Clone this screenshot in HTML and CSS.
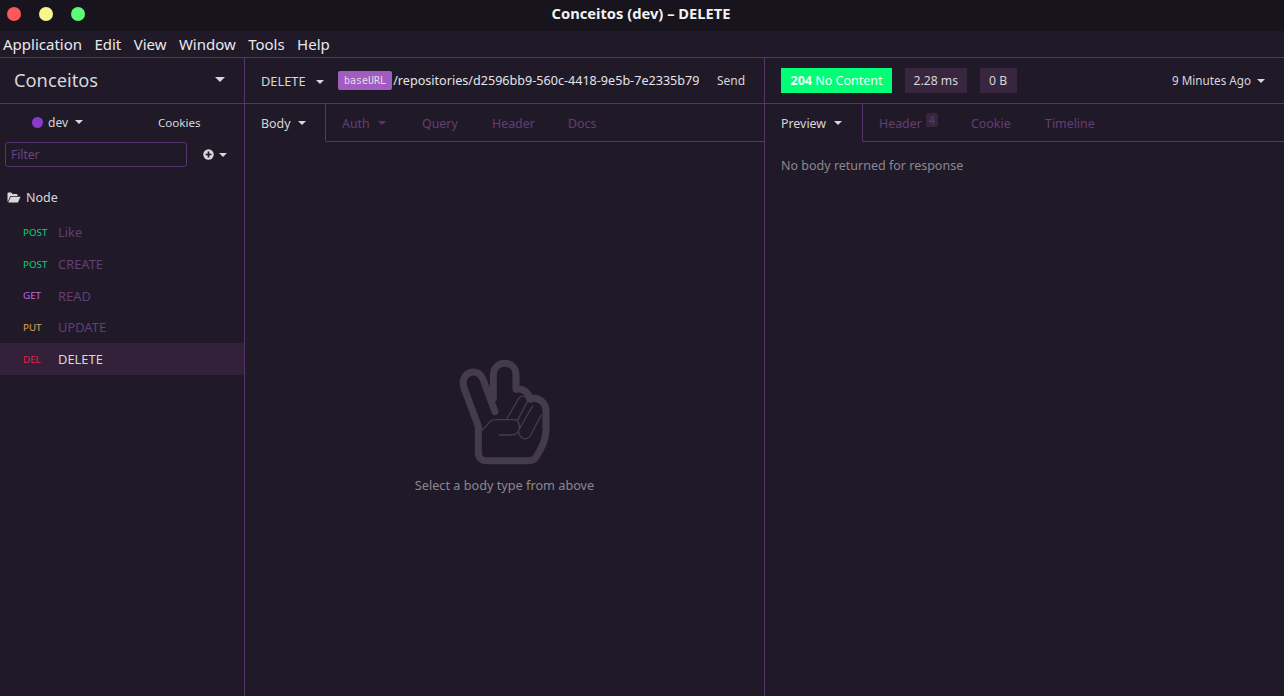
FILE: index.html
```html
<!DOCTYPE html>
<html lang="en">
<head>
<meta charset="utf-8">
<title>Conceitos (dev) – DELETE</title>
<link rel="stylesheet" href="styles.css">
</head>
<body>
<header class="titlebar">
  <div class="lights"><i class="light red"></i><i class="light yellow"></i><i class="light green"></i></div>
  <div class="title">Conceitos (dev) – DELETE</div>
</header>
<nav class="menubar">
  <span>Application</span><span>Edit</span><span>View</span><span>Window</span><span>Tools</span><span>Help</span>
</nav>
<main class="app">
  <aside class="sidebar">
    <div class="ws-head"><span class="ws-name">Conceitos</span><i class="caret big"></i></div>
    <div class="env-row">
      <span class="env"><i class="dot"></i>dev<i class="caret"></i></span>
      <span class="cookies">Cookies</span>
    </div>
    <div class="filter-row">
      <div class="filter">Filter</div>
      <span class="add">
        <svg width="11" height="11" viewBox="0 0 11 11"><circle cx="5.5" cy="5.5" r="5.2" fill="#d8d6db"/><path d="M5.5 2.6v5.8M2.6 5.5h5.8" stroke="#201a28" stroke-width="1.7"/></svg>
        <i class="caret"></i>
      </span>
    </div>
    <div class="folder">
      <svg width="14" height="11" viewBox="0 0 14 11"><path d="M0.5 9.5V1.6C.5 1 1 .5 1.6 .5h2.6l1.3 1.4h4c.6 0 1 .4 1 1V4H3.4L.8 9.6z" fill="#d8d6db"/><path d="M3.8 4.8h9.7L11 10.4H1.2z" fill="#d8d6db"/></svg>
      Node
    </div>
    <ul class="reqs">
      <li class="req"><span class="method post">POST</span><span class="rname">Like</span></li>
      <li class="req"><span class="method post">POST</span><span class="rname">CREATE</span></li>
      <li class="req"><span class="method get">GET</span><span class="rname">READ</span></li>
      <li class="req"><span class="method put">PUT</span><span class="rname">UPDATE</span></li>
      <li class="req active"><span class="method del">DEL</span><span class="rname">DELETE</span></li>
    </ul>
  </aside>
  <section class="pane request">
    <div class="pane-head">
      <span class="verb">DELETE<i class="caret"></i></span>
      <div class="url"><span class="tag">baseURL</span><span class="path">/repositories/d2596bb9-560c-4418-9e5b-7e2335b79</span></div>
      <span class="send">Send</span>
    </div>
    <div class="tabs">
      <span class="tab active body-tab">Body<i class="caret"></i></span>
      <span class="tab auth">Auth<i class="caret dim"></i></span>
      <span class="tab query">Query</span>
      <span class="tab hdr">Header</span>
      <span class="tab docs">Docs</span>
      <span class="tab-fill"></span>
    </div>
    <div class="empty">
      <svg class="hand" width="130" height="125" viewBox="0 0 390 375" fill="none" stroke="#443c4a" stroke-linecap="round" stroke-linejoin="round">
        <path stroke-width="21" d="M116 232L73 116C62 88 78 68 98 66C114 65 124 74 130 90L165 185M160 145V76C160 52 176 40 195 40C214 40 228 54 228 76V118C246 114 262 124 272 148C294 138 318 158 318 184V240C318 270 302 300 288 322C284 329 276 332 268 332H140C124 332 115 322 115 308V232"/>
        <path stroke-width="4" d="M127 240L152 214C156 210 160 209 166 209H222C234 209 240 222 238 236C236 248 226 255 214 255H178M200 207L236 145C244 132 262 140 262 155L232 212M236 240L278 168M304 195L272 255C262 272 240 270 236 245"/>
      </svg>
      <p class="hint">Select a body type from above</p>
    </div>
  </section>
  <section class="pane response">
    <div class="pane-head res-head">
      <span class="status"><b>204</b> No Content</span>
      <span class="stat">2.28 ms</span>
      <span class="stat">0 B</span>
      <span class="ago">9 Minutes Ago<i class="caret"></i></span>
    </div>
    <div class="tabs">
      <span class="tab active preview-tab">Preview<i class="caret"></i></span>
      <span class="tab rhdr">Header<span class="count">4</span></span>
      <span class="tab cookie">Cookie</span>
      <span class="tab timeline">Timeline</span>
      <span class="tab-fill"></span>
    </div>
    <p class="nobody">No body returned for response</p>
  </section>
</main>
</body>
</html>
```
FILE: styles.css
```css
* { box-sizing: border-box; }
html, body { height: 100%; }
body {
  margin: 0;
  display: flex;
  flex-direction: column;
  height: 696px;
  overflow: hidden;
  background: #201a28;
  color: #d8d6db;
  font-family: "Noto Sans", "Open Sans", sans-serif;
  font-size: 12px;
}
i { display: inline-block; font-style: normal; }
.titlebar {
  height: 31px;
  flex: none;
  background: #17141e;
  display: flex;
  align-items: center;
  justify-content: center;
  position: relative;
  padding: 0 2px 5px 0;
}
.lights { position: absolute; left: 7px; top: 7px; display: flex; gap: 18px; }
.light { width: 14px; height: 14px; border-radius: 50%; }
.red { background: #ff5858; }
.yellow { background: #f6f68c; }
.green { background: #5afc78; }
.title { font-weight: 700; font-size: 14.7px; color: #f2f2f2; }
.menubar {
  height: 26px;
  flex: none;
  display: flex;
  align-items: center;
  gap: 12.4px;
  padding: 0 0 0 3px;
  background: #201a28;
  color: #e9e9ec;
  font-size: 15px;
}
.app {
  flex: 1;
  display: flex;
  border-top: 1px solid #56356a;
  min-height: 0;
}
.sidebar {
  width: 245px;
  flex: none;
  border-right: 1px solid #56356a;
}
.ws-head {
  height: 46px;
  display: flex;
  align-items: center;
  justify-content: space-between;
  padding: 0 19px 2px 14px;
  border-bottom: 1px solid #56356a;
}
.ws-name { font-size: 18.3px; color: #d8d6db; }
.caret {
  width: 0;
  height: 0;
  border-left: 4.5px solid transparent;
  border-right: 4.5px solid transparent;
  border-top: 4.5px solid #d8d6db;
  margin-left: 6px;
  vertical-align: 2px;
}
.caret.big { border-left-width: 5px; border-right-width: 5px; border-top-width: 5px; }
.caret.dim { border-top-color: #56356a; }
.env-row { height: 38px; display: flex; align-items: center; padding: 0 0 2px 32px; }
.env { display: flex; align-items: center; width: 126px; }
.env .caret { margin-left: 7px; }
.dot { width: 11px; height: 11px; border-radius: 50%; background: #8a3cc8; margin-right: 5px; }
.cookies { font-size: 11.6px; }
.filter-row { display: flex; align-items: center; padding-left: 5px; }
.filter {
  width: 182px;
  height: 25px;
  border: 1px solid #56356a;
  border-radius: 3px;
  padding: 3px 5px;
  color: #6b4380;
}
.add { display: flex; align-items: center; margin-left: 16px; }
.add .caret { margin-left: 5px; vertical-align: 0; }
.folder {
  display: flex;
  align-items: center;
  gap: 5px;
  padding: 0 0 0 7px;
  margin-top: 14px;
  height: 32px;
  font-size: 12.5px;
}
.reqs { list-style: none; margin: 3px 0 0; padding: 0; }
.req { height: 32px; display: flex; align-items: center; padding-left: 23px; }
.req:nth-child(3) { height: 31px; }
.method { width: 35px; font-size: 9.8px; }
.post { color: #00d878; }
.get { color: #c068e8; }
.put { color: #e0a458; }
.del { color: #e8224e; }
.rname { color: #623e75; font-size: 12.9px; }
.active .rname { color: #d8d6db; }
.req.active { background: #33213a; }
.pane { display: flex; flex-direction: column; min-width: 0; }
.request { width: 520px; flex: none; border-right: 1px solid #56356a; }
.response { flex: 1; }
.pane-head {
  height: 46px;
  flex: none;
  display: flex;
  align-items: center;
  padding-left: 16px;
  border-bottom: 1px solid #56356a;
}
.verb { width: 77px; white-space: nowrap; font-size: 12.8px; }
.verb .caret { margin-left: 10px; }
.url { width: 361px; display: flex; align-items: center; overflow: hidden; white-space: nowrap; }
.tag {
  background: #a05cc0;
  color: #e6dcea;
  font-family: "DejaVu Sans Mono", monospace;
  font-size: 10px;
  padding: 2px 6px;
  height: 19px;
  line-height: 15px;
  border-radius: 2px;
  margin-right: 1px;
  flex: none;
}
.path { font-size: 12.6px; color: #e4e4e6; }
.send { margin-left: 18px; }
.tabs { height: 38px; flex: none; display: flex; font-size: 12.4px; }
.tab {
  display: flex;
  align-items: center;
  white-space: nowrap;
  color: #623e75;
  padding-top: 1px;
  border-bottom: 1px solid #56356a;
}
.tab.active { color: #d8d6db; border-bottom-color: transparent; border-right: 1px solid #56356a; }
.tab .caret { margin-left: 7px; }
.preview-tab .caret { margin-left: 8px; }
.auth .caret { margin-left: 8px; }
.tab-fill { flex: 1; border-bottom: 1px solid #56356a; }
.body-tab { width: 81px; padding-left: 16px; }
.auth { width: 80px; padding-left: 16px; }
.query { width: 70px; padding-left: 16px; }
.hdr { width: 76px; padding-left: 16px; }
.docs { width: 60px; padding-left: 16px; }
.empty { flex: 1; display: flex; flex-direction: column; align-items: center; padding-top: 208px; }
.hand { display: block; margin-left: 1px; }
.hint { margin: 1px 0 0; color: #8b8790; font-size: 12.7px; }
.res-head { gap: 13px; }
.status { background: #00ff76; color: #f4fff8; padding: 0 9.5px; height: 25px; line-height: 25px; font-size: 12.5px; }
.status b { font-weight: 700; }
.stat { background: #38263f; height: 25px; line-height: 25px; padding: 0 8.5px; font-size: 12.2px; }
.stat + .stat { padding: 0 9.5px; }
.ago { margin-left: auto; padding: 0 19px 2px 0; font-size: 11.7px; }
.preview-tab { width: 98px; padding-left: 16px; }
.rhdr { width: 92px; padding-left: 16px; position: relative; }
.count {
  background: #38263f;
  color: #5f3a72;
  font-size: 10px;
  width: 12px;
  height: 14px;
  line-height: 14px;
  text-align: center;
  border-radius: 2px;
  margin: -7px 0 0 4px;
}
.cookie { width: 74px; padding-left: 16px; }
.timeline { width: 83px; padding-left: 16px; }
.nobody { margin: 15px 0 0 16px; color: #8b8790; font-size: 12.5px; }
```
